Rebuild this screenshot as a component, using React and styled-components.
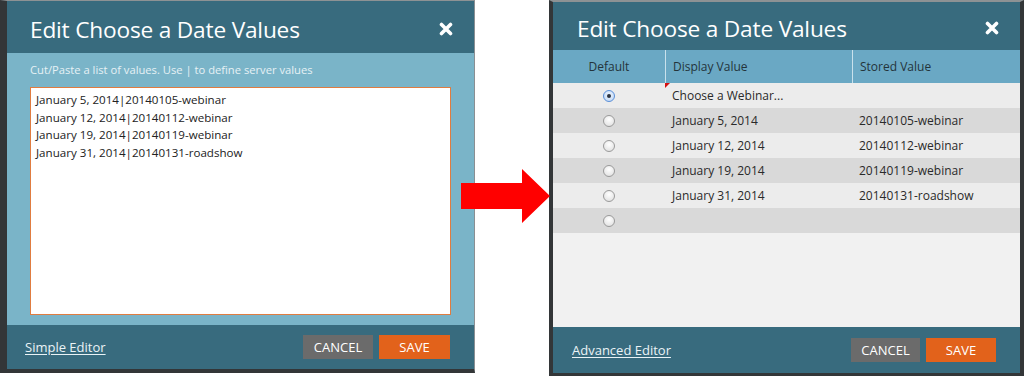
import { styled, createGlobalStyle } from "styled-components";

const GlobalStyle = createGlobalStyle`
  body {
    margin: 0;
    background: #ffffff;
    font-family: "Open Sans", "Liberation Sans", sans-serif;
  }
`;

const Stage = styled.div`
  position: relative;
  width: 1024px;
  height: 376px;
  display: flex;
  justify-content: space-between;
  align-items: flex-start;
  overflow: hidden;
`;

const Dialog = styled.div`
  box-sizing: border-box;
  width: 475px;
  height: ${(p) => (p.$side === "left" ? "373px" : "376px")};
  display: flex;
  flex-direction: column;
  border-left: ${(p) => (p.$side === "left" ? "7px" : "4px")} solid #333638;
  border-right: ${(p) => (p.$side === "left" ? "1px solid #8a8f92" : "4px solid #333638")};
  border-top: ${(p) => (p.$side === "left" ? "1px" : "2px")} solid #8d9294;
  border-bottom: ${(p) => (p.$side === "left" ? "4px" : "3px")} solid #333638;
`;

const Header = styled.div`
  height: ${(p) => p.$h}px;
  flex: none;
  background: #386b7e;
  display: flex;
  align-items: center;
  justify-content: space-between;
  padding: 4px ${(p) => p.$pr}px 0 ${(p) => p.$pl}px;
  box-sizing: border-box;
`;

const Title = styled.h1`
  margin: 0;
  font-size: 22.7px;
  font-weight: 400;
  color: #ffffff;
  letter-spacing: -0.2px;
`;

const Close = styled.svg`
  width: 14px;
  height: 14px;
  display: block;
`;

const PasteBody = styled.div`
  flex: 1;
  background: #7ab4c8;
  padding: 9px 23px 10px 23px;
  display: flex;
  flex-direction: column;
`;

const Hint = styled.div`
  font-size: 11.2px;
  line-height: 16px;
  color: #e6f1f5;
  margin-bottom: 9px;
`;

const ValuesBox = styled.textarea`
  flex: 1;
  resize: none;
  margin: 0;
  border: 1px solid #e07c40;
  background: #ffffff;
  padding: 3px 5px;
  font-family: "Open Sans", "Liberation Sans", sans-serif;
  font-size: 11.6px;
  line-height: 17.5px;
  color: #222;
  outline: none;
`;

const Footer = styled.div`
  flex: none;
  height: ${(p) => p.$h}px;
  background: #386b7e;
  display: flex;
  align-items: center;
  justify-content: space-between;
  padding: 0 24px 0 ${(p) => p.$pl}px;
  box-sizing: border-box;
`;

const EditorLink = styled.a`
  font-size: 13px;
  color: #eaf3f6;
  text-decoration: underline;
  text-underline-offset: 2px;
  cursor: pointer;
`;

const Buttons = styled.div`
  display: flex;
  gap: 6px;
`;

const Button = styled.button`
  height: 24px;
  width: ${(p) => p.$w}px;
  border: none;
  margin: 0;
  padding: 0;
  font-family: "Open Sans", "Liberation Sans", sans-serif;
  font-size: 13px;
  color: #ffffff;
  background: ${(p) => (p.$primary ? "#e2621b" : "#6b6b6b")};
`;

const TableBody = styled.div`
  flex: 1;
  background: #f1f1f1;
`;

const Grid = styled.div`
  display: grid;
  grid-template-columns: 112px 187px 1fr;
`;

const HeadCell = styled.div`
  height: 33px;
  background: #6aa8c4;
  display: flex;
  align-items: center;
  justify-content: ${(p) => (p.$center ? "center" : "flex-start")};
  padding-left: ${(p) => (p.$center ? 0 : 7)}px;
  font-size: 12px;
  color: #24343b;
  border-left: ${(p) => (p.$first ? "none" : "1px solid #c9e1ec")};
  box-sizing: border-box;
`;

const Cell = styled.div`
  position: relative;
  height: 25px;
  display: flex;
  align-items: center;
  justify-content: ${(p) => (p.$center ? "center" : "flex-start")};
  padding-left: ${(p) => (p.$center ? 0 : 7)}px;
  font-size: 12px;
  color: #2a2a2a;
  background: ${(p) => (p.$odd ? "#d9d9d9" : "#ececec")};
  box-sizing: border-box;

  ${(p) =>
    p.$dirty &&
    `&::before {
      content: "";
      position: absolute;
      left: 0;
      top: 0;
      border-top: 5px solid #d41010;
      border-right: 5px solid transparent;
    }`}
`;

const Radio = styled.span`
  width: 12px;
  height: 12px;
  border-radius: 50%;
  box-sizing: border-box;
  display: flex;
  align-items: center;
  justify-content: center;
  border: 1px solid ${(p) => (p.$checked ? "#5a8fd8" : "#9a9a9a")};
  background: ${(p) =>
    p.$checked
      ? "radial-gradient(circle at 50% 40%, #eef5ff, #b9d3f3)"
      : "radial-gradient(circle at 50% 35%, #ffffff, #dcdcdc)"};

  &::after {
    content: "";
    width: 4px;
    height: 4px;
    border-radius: 50%;
    background: #2b3340;
    display: ${(p) => (p.$checked ? "block" : "none")};
  }
`;

const Arrow = styled.svg`
  position: absolute;
  left: 461px;
  top: 169px;
  width: 89px;
  height: 54px;
`;

const rows = [
  { display: "Choose a Webinar...", stored: "", checked: true, dirty: true },
  { display: "January 5, 2014", stored: "20140105-webinar" },
  { display: "January 12, 2014", stored: "20140112-webinar" },
  { display: "January 19, 2014", stored: "20140119-webinar" },
  { display: "January 31, 2014", stored: "20140131-roadshow" },
  { display: "", stored: "" },
];

const pasted = rows
  .filter((r) => r.stored)
  .map((r) => `${r.display}|${r.stored}`)
  .join("\n");

function CloseIcon() {
  return (
    <Close viewBox="0 0 14 14">
      <path d="M2.5 2.5 L11.5 11.5 M11.5 2.5 L2.5 11.5" stroke="#fff" strokeWidth="3.6" strokeLinecap="round" />
    </Close>
  );
}

export default function App() {
  return (
    <>
      <GlobalStyle />
      <Stage>
        <Dialog $side="left">
          <Header $h={52} $pl={23} $pr={21}>
            <Title>Edit Choose a Date Values</Title>
            <CloseIcon />
          </Header>
          <PasteBody>
            <Hint>Cut/Paste a list of values. Use | to define server values</Hint>
            <ValuesBox readOnly value={pasted} />
          </PasteBody>
          <Footer $h={44} $pl={18}>
            <EditorLink>Simple Editor</EditorLink>
            <Buttons>
              <Button $w={70}>CANCEL</Button>
              <Button $w={71} $primary>SAVE</Button>
            </Buttons>
          </Footer>
        </Dialog>

        <Dialog $side="right">
          <Header $h={48} $pl={24} $pr={21}>
            <Title>Edit Choose a Date Values</Title>
            <CloseIcon />
          </Header>
          <TableBody>
            <Grid>
              <HeadCell $center $first>Default</HeadCell>
              <HeadCell>Display Value</HeadCell>
              <HeadCell>Stored Value</HeadCell>
              {rows.map((r, i) => [
                <Cell key={`r${i}`} $center $odd={i % 2 === 1}>
                  <Radio $checked={r.checked} />
                </Cell>,
                <Cell key={`d${i}`} $odd={i % 2 === 1} $dirty={r.dirty}>
                  {r.display}
                </Cell>,
                <Cell key={`s${i}`} $odd={i % 2 === 1}>
                  {r.stored}
                </Cell>,
              ])}
            </Grid>
          </TableBody>
          <Footer $h={46} $pl={19}>
            <EditorLink>Advanced Editor</EditorLink>
            <Buttons>
              <Button $w={69}>CANCEL</Button>
              <Button $w={70} $primary>SAVE</Button>
            </Buttons>
          </Footer>
        </Dialog>

        <Arrow viewBox="0 0 89 54">
          <path d="M0 14 H61 V0 L89 27 L61 54 V40 H0 Z" fill="#ff0000" />
        </Arrow>
      </Stage>
    </>
  );
}
